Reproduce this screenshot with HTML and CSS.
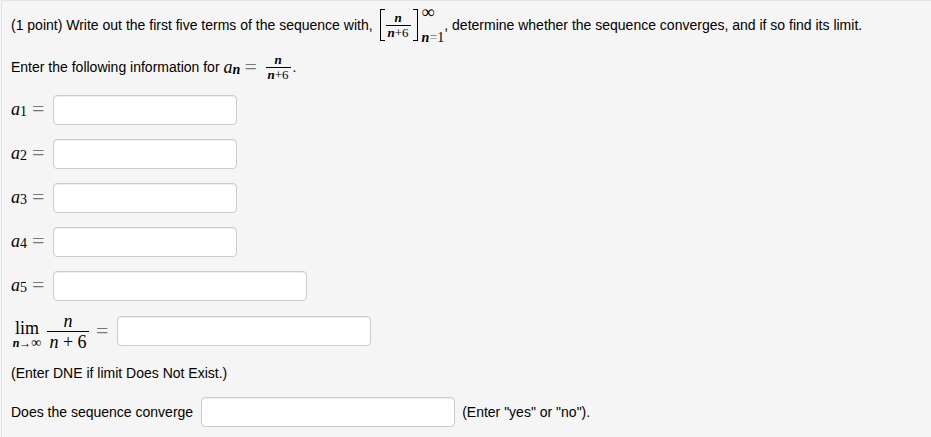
FILE: index.html
```html
<!DOCTYPE html>
<html lang="en">
<head>
    <meta charset="UTF-8">
    <meta name="viewport" content="width=device-width, initial-scale=1.0">
    <title>Sequence Convergence</title>
    <link rel="stylesheet" href="styles.css">
</head>
<body>
    <form class="problem">
        <div class="row intro">
            <span>(1 point) Write out the first five terms of the sequence with,</span>
            <span class="bracketed">
                <span class="bracket left"></span>
                <span class="frac small"><i>n</i><span><i>n</i>+6</span></span>
                <span class="bracket right"></span>
                <span class="limits"><span class="inf">∞</span><span><i>n</i><span class="rel">=</span>1</span></span>
            </span>
            <span>, determine whether the sequence converges, and if so find its limit.</span>
        </div>

        <div class="row info">
            <span>Enter the following information for</span>
            <span class="math var"><i>a</i><sub><i>n</i></sub></span>
            <span class="math eq">=</span>
            <span class="frac small"><i>n</i><span><i>n</i>+6</span></span>
            <span class="stop">.</span>
        </div>

        <div class="row term">
            <label for="a1"><span class="math var"><i>a</i><sub>1</sub></span><span class="math eq">=</span></label>
            <input type="text" id="a1">
        </div>
        <div class="row term">
            <label for="a2"><span class="math var"><i>a</i><sub>2</sub></span><span class="math eq">=</span></label>
            <input type="text" id="a2">
        </div>
        <div class="row term">
            <label for="a3"><span class="math var"><i>a</i><sub>3</sub></span><span class="math eq">=</span></label>
            <input type="text" id="a3">
        </div>
        <div class="row term">
            <label for="a4"><span class="math var"><i>a</i><sub>4</sub></span><span class="math eq">=</span></label>
            <input type="text" id="a4">
        </div>
        <div class="row term">
            <label for="a5"><span class="math var"><i>a</i><sub>5</sub></span><span class="math eq">=</span></label>
            <input type="text" id="a5" class="wide">
        </div>

        <div class="row limit">
            <label for="lim">
                <span class="lim"><span>lim</span><span class="under"><i>n</i>→<span class="inf">∞</span></span></span>
                <span class="frac big"><i>n</i><span><i>n</i> + 6</span></span>
                <span class="math eq">=</span>
            </label>
            <input type="text" id="lim" class="wide">
        </div>

        <div class="row note">(Enter DNE if limit Does Not Exist.)</div>

        <div class="row answer">
            <label for="converge">Does the sequence converge</label>
            <input type="text" id="converge" class="wide">
            <span>(Enter "yes" or "no").</span>
        </div>
    </form>
</body>
</html>
```

FILE: styles.css
```css
* {
    box-sizing: border-box;
}
body {
    margin: 0;
    background-color: #f5f5f5;
    color: #000;
    font-family: Arial, "Liberation Sans", sans-serif;
    font-size: 14px;
    line-height: 20px;
}
.problem {
    min-height: 100vh;
    margin-left: 1px;
    padding: 4px 9px 9px;
    border-top: 1px solid #e3e3e3;
    border-left: 1px solid #e3e3e3;
}
.row {
    display: flex;
    align-items: center;
    white-space: nowrap;
    margin-bottom: 14px;
}
.row label {
    display: flex;
    align-items: center;
}
.intro {
    height: 40px;
    margin-bottom: 8px;
}
.info {
    height: 28px;
}
input {
    width: 184px;
    height: 30px;
    padding: 4px 6px;
    border: 1px solid #ccc;
    border-radius: 4px;
    background-color: #fff;
    box-shadow: inset 0 1px 1px rgba(0, 0, 0, 0.075);
    font: inherit;
}
input.wide {
    width: 254px;
}

/* math */
.math, .frac, .limits, .lim {
    font-family: "Liberation Serif", "Times New Roman", serif;
}
i {
    font-weight: bold;
}
.var {
    display: inline-flex;
    align-items: center;
    width: 18px;
    font-size: 18px;
    line-height: 18px;
}
.var > i {
    font-weight: normal;
}
.var sub {
    padding-top: 6px;
    font-size: 14px;
    line-height: 14px;
    vertical-align: baseline;
}
.eq {
    width: 14px;
    margin-left: 3px;
    color: #777;
    font-size: 22px;
}
.rel {
    color: #777;
}
.term .eq {
    margin-right: 7px;
}
.term label {
    padding-bottom: 2px;
}
.frac {
    display: inline-flex;
    flex-direction: column;
    align-items: center;
}
.frac > span {
    border-top: 1px solid #000;
    text-align: center;
}
.small {
    font-size: 13px;
    line-height: 14px;
}
.small > span {
    width: 25px;
}
.bracketed {
    display: flex;
    align-items: center;
    margin-left: 7px;
}
.bracket {
    width: 5px;
    height: 32px;
    border: 1px solid #000;
}
.left {
    margin-right: 1px;
    border-right: none;
}
.right {
    margin-left: 2px;
    border-left: none;
}
.limits {
    display: flex;
    flex-direction: column;
    justify-content: space-between;
    height: 40px;
    margin-left: 4px;
    font-size: 14px;
    line-height: 14px;
}
.inf {
    font-size: 18px;
}
.info .var {
    margin-left: 4px;
}
.info .eq {
    margin-right: 7px;
}
.stop {
    margin-left: 2px;
}

.limit {
    height: 40px;
    margin-top: -4px;
    margin-bottom: 12px;
}
.lim {
    display: flex;
    flex-direction: column;
    align-items: center;
    width: 32px;
    padding-top: 6px;
    font-size: 18px;
    line-height: 18px;
}
.under {
    font-size: 12px;
    line-height: 12px;
}
.under .inf {
    font-size: 14px;
}
.big {
    width: 42px;
    margin-left: 4px;
    font-size: 18px;
    line-height: 20px;
}
.big i {
    font-weight: normal;
}
.big > span {
    width: 100%;
}
.limit .eq {
    margin-left: 7px;
    margin-right: 7px;
}
.answer {
    gap: 7px;
    margin-bottom: 0;
}
.answer label {
    padding-right: 1px;
}
```
